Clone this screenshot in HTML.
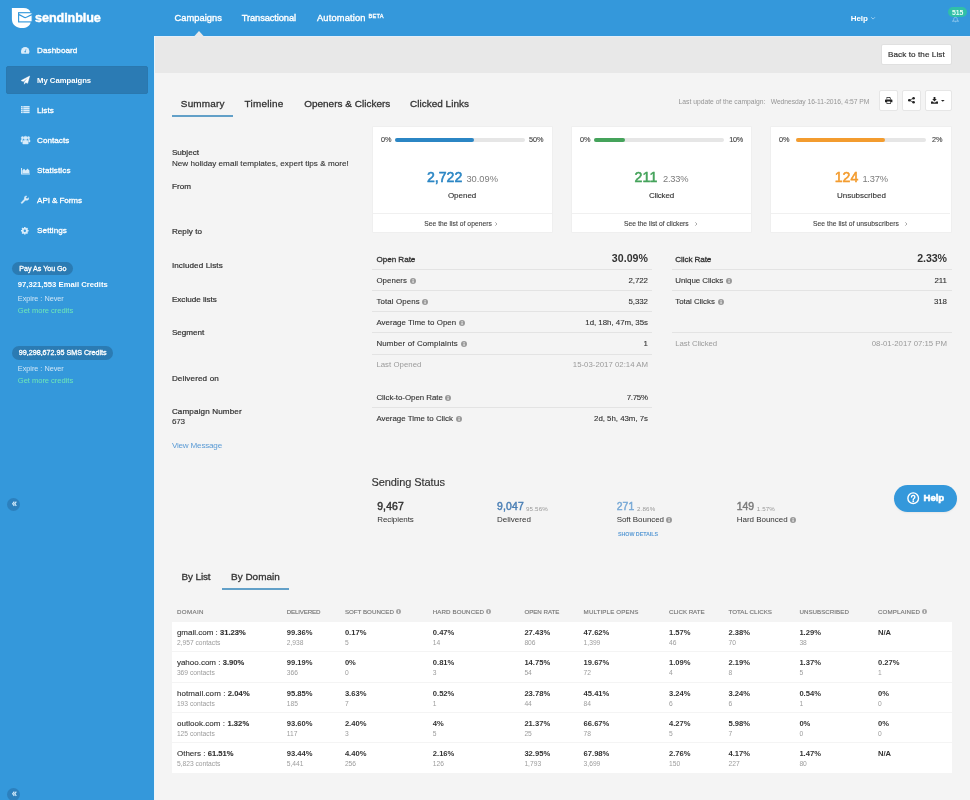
<!DOCTYPE html>
<html lang="en"><head><meta charset="utf-8"><title>SendinBlue - Campaign Report</title>
<style>
html,body{margin:0;padding:0;overflow:hidden}
body{width:970px;height:800px;overflow:hidden;position:relative;background:#f4f4f4;font-family:"Liberation Sans", sans-serif;-webkit-font-smoothing:antialiased}
.t{position:absolute;white-space:pre;line-height:12px}
.b{position:absolute}
svg{position:absolute;overflow:visible}
.logo{font-size:12.6px;font-weight:700;color:#fff;-webkit-text-stroke:0.45px #fff}
.menu{font-size:8.1px;font-weight:400;color:#fff;-webkit-text-stroke:0.3px #fff}
.menuA{font-size:7.7px;font-weight:700;color:#fff;}
.nav{font-size:9.3px;font-weight:400;color:#fff;-webkit-text-stroke:0.35px #fff}
.beta{font-size:5.6px;font-weight:400;color:#fff;-webkit-text-stroke:0.3px #fff}
.help{font-size:8.0px;font-weight:700;color:#fff;}
.badge{font-size:6.9px;font-weight:700;color:#e8fff6;}
.pillt{font-size:7.15px;font-weight:400;color:#fff;-webkit-text-stroke:0.3px #fff}
.cred{font-size:7.7px;font-weight:700;color:#fff;}
.exp{font-size:7.3px;font-weight:400;color:#cfe5f6;}
.get{font-size:7.6px;font-weight:400;color:#6ee7b7;}
.btnt{font-size:8.1px;font-weight:400;color:#333;-webkit-text-stroke:0.2px #333}
.tab{font-size:9.95px;font-weight:400;color:#333;-webkit-text-stroke:0.3px #333}
.lbl{font-size:8.1px;font-weight:400;color:#333;-webkit-text-stroke:0.22px #333}
.val{font-size:8.1px;font-weight:400;color:#333;-webkit-text-stroke:0.12px #333}
.link{font-size:8.1px;font-weight:400;color:#5b9bd5;}
.upd{font-size:6.75px;font-weight:400;color:#969696;}
.pct{font-size:7.3px;font-weight:400;color:#444;-webkit-text-stroke:0.12px #444}
.big{font-size:14.1px;font-weight:400;color:#333;-webkit-text-stroke:0.55px}
.bigp{font-size:9.3px;font-weight:400;color:#7c7c7c;}
.cl{font-size:8.0px;font-weight:400;color:#333;-webkit-text-stroke:0.12px #333}
.see{font-size:6.7px;font-weight:400;color:#444;-webkit-text-stroke:0.12px #444}
.srow{font-size:7.9px;font-weight:400;color:#333;-webkit-text-stroke:0.12px #333}
.srowb{font-size:8.1px;font-weight:400;color:#333;-webkit-text-stroke:0.3px #333}
.srowg{font-size:7.8px;font-weight:400;color:#9a9a9a;}
.sbig{font-size:10.6px;font-weight:700;color:#333;}
.h2{font-size:11.0px;font-weight:400;color:#333;-webkit-text-stroke:0.15px #333}
.ssn{font-size:10.4px;font-weight:400;color:#333;-webkit-text-stroke:0.45px}
.ssp{font-size:6.2px;font-weight:400;color:#999;}
.ssl{font-size:8.0px;font-weight:400;color:#333;}
.show{font-size:5.4px;font-weight:700;color:#5b9bd5;}
.th{font-size:6.2px;font-weight:400;color:#777;-webkit-text-stroke:0.15px #777}
.td{font-size:8.0px;font-weight:400;color:#333;-webkit-text-stroke:0.12px #333}
.tdb{font-size:7.6px;font-weight:700;color:#333;}
.tds{font-size:6.7px;font-weight:400;color:#9c9c9c;}
.hb{font-size:9.6px;font-weight:700;color:#fff;-webkit-text-stroke:0.55px #fff}

.side{left:0;top:0;width:154px;height:800px;background:#3498db}
.top{left:0;top:0;width:970px;height:36px;background:#3498db}
.bar{left:154px;top:36px;width:816px;height:37px;background:#e8e8e8;border-top:1px solid #e4eef8;box-sizing:border-box}
.act{left:6px;top:66px;width:142px;height:27.5px;background:#2b7bb4;border-radius:2px;box-sizing:border-box;border:1px solid #2a78af}
.pill{background:#2b7bb3;border-radius:8px}
.card{background:#fff;border:1px solid #efefef;box-sizing:border-box;border-radius:1px}
.hl{height:1px;background:#e3e3e3}
.btn{background:#fff;border:1px solid #e6e6e6;box-sizing:border-box;border-radius:2px}
.pb{height:4px;border-radius:2px;background:#e6e6e6}
.pf{height:4px;border-radius:2px}
.ul{height:2px;background:#62a0c8}
.circ{width:13px;height:13px;border-radius:6.5px;background:#2c80be}

</style></head><body>
<div class="b side"></div><div class="b top"></div><div class="b bar"></div>
<div class="b act"></div>
<div class="b" style="left:154px;top:36px;width:1px;height:764px;background:#eaf5fc"></div>
<svg style="left:193.6px;top:30.5px" width="10" height="5.5"><path d="M0 5.5 L5 0 L10 5.5Z" fill="#e8e8e8"/></svg>
<svg style="left:870.6px;top:16.9px" width="4.2" height="2.5" viewBox="0 0 5 3"><path d="M0.3 0.3 L2.5 2.5 L4.7 0.3" fill="none" stroke="#bfe0f7" stroke-width="0.9"/></svg>
<div class="b" style="left:948.2px;top:6.8px;width:18.5px;height:10px;border-radius:5px;background:#30bfa8"></div>
<svg style="left:952px;top:17px" width="7" height="5.6" viewBox="0 0 14 11.2"><path d="M7 0.6 C4.6 0.6 3.4 2.6 3.4 5 C3.4 7 2.4 8 0.8 8.4 L13.2 8.4 C11.6 8 10.6 7 10.6 5 C10.6 2.6 9.4 0.6 7 0.6Z" fill="none" stroke="#cfe9fb" stroke-width="1.3" opacity="0.75"/><path d="M5.4 9.4 a1.7 1.5 0 0 0 3.2 0Z" fill="#cfe9fb"/></svg>
<div class="b pill" style="left:12.2px;top:261.6px;width:60.6px;height:13.8px;border-radius:6.9px"></div>
<div class="b pill" style="left:12.2px;top:345.7px;width:100.9px;height:14px;border-radius:7px"></div>
<div class="b circ" style="left:7.2px;top:497.5px"></div>
<svg style="left:11.6px;top:501.4px" width="4.8" height="5.6" viewBox="0 0 10 11"><path d="M4.8 1 L1.4 5.5 L4.8 10 M9 1 L5.6 5.5 L9 10" fill="none" stroke="#d6ecfb" stroke-width="2.4"/></svg>
<div class="b circ" style="left:7.2px;top:787.5px"></div>
<svg style="left:11.6px;top:791.4px" width="4.8" height="5.6" viewBox="0 0 10 11"><path d="M4.8 1 L1.4 5.5 L4.8 10 M9 1 L5.6 5.5 L9 10" fill="none" stroke="#d6ecfb" stroke-width="2.4"/></svg>
<div class="b btn" style="left:881px;top:44px;width:71px;height:20.5px;border-color:#e0e0e0"></div>
<div class="b ul" style="left:171.7px;top:115px;width:61.7px"></div>
<div class="b btn" style="left:878.5px;top:90.4px;width:19.8px;height:20.2px"></div>
<div class="b btn" style="left:902px;top:90.4px;width:19.2px;height:20.2px"></div>
<div class="b btn" style="left:924.7px;top:90.4px;width:27.2px;height:20.2px"></div>
<div class="b card" style="left:372px;top:126px;width:181px;height:106.5px"></div>
<div class="b hl" style="left:373px;top:212.8px;width:179px;background:#f0f0f0"></div>
<div class="b pb" style="left:394.9px;top:138px;width:130px"></div>
<div class="b pf" style="left:394.9px;top:138px;width:78.8px;background:#2b86c4"></div>
<div class="b card" style="left:571px;top:126px;width:181px;height:106.5px"></div>
<div class="b hl" style="left:572px;top:212.8px;width:179px;background:#f0f0f0"></div>
<div class="b pb" style="left:594px;top:138px;width:130px"></div>
<div class="b pf" style="left:594px;top:138px;width:30.5px;background:#45a35b"></div>
<div class="b card" style="left:770px;top:126px;width:182px;height:106.5px"></div>
<div class="b hl" style="left:771px;top:212.8px;width:179px;background:#f0f0f0"></div>
<div class="b pb" style="left:796.4px;top:138px;width:130px"></div>
<div class="b pf" style="left:796.4px;top:138px;width:88.6px;background:#f39c2f"></div>
<svg style="left:495.3px;top:221.6px" width="2.4" height="4" viewBox="0 0 3 5"><path d="M0.4 0.4 L2.5 2.5 L0.4 4.6" fill="none" stroke="#666" stroke-width="0.7"/></svg>
<svg style="left:694.5px;top:221.6px" width="2.4" height="4" viewBox="0 0 3 5"><path d="M0.4 0.4 L2.5 2.5 L0.4 4.6" fill="none" stroke="#666" stroke-width="0.7"/></svg>
<svg style="left:904.5px;top:221.6px" width="2.4" height="4" viewBox="0 0 3 5"><path d="M0.4 0.4 L2.5 2.5 L0.4 4.6" fill="none" stroke="#666" stroke-width="0.7"/></svg>
<div class="b hl" style="left:372px;top:269px;width:280px"></div>
<div class="b hl" style="left:372px;top:290px;width:280px"></div>
<div class="b hl" style="left:372px;top:311px;width:280px"></div>
<div class="b hl" style="left:372px;top:332px;width:280px"></div>
<div class="b hl" style="left:372px;top:354px;width:280px"></div>
<div class="b hl" style="left:372px;top:407px;width:280px"></div>
<div class="b hl" style="left:672px;top:269px;width:280px"></div>
<div class="b hl" style="left:672px;top:290px;width:280px"></div>
<div class="b hl" style="left:672px;top:332px;width:280px"></div>
<svg style="left:409.6px;top:278.0px" width="6" height="6" viewBox="0 0 12 12"><circle cx="6" cy="6" r="6" fill="#999"/><rect x="5" y="5" width="2.2" height="4.6" fill="#f4f4f4"/><rect x="5" y="2.3" width="2.2" height="1.8" fill="#f4f4f4"/></svg>
<svg style="left:422.3px;top:298.90000000000003px" width="6" height="6" viewBox="0 0 12 12"><circle cx="6" cy="6" r="6" fill="#999"/><rect x="5" y="5" width="2.2" height="4.6" fill="#f4f4f4"/><rect x="5" y="2.3" width="2.2" height="1.8" fill="#f4f4f4"/></svg>
<svg style="left:458.9px;top:320.1px" width="6" height="6" viewBox="0 0 12 12"><circle cx="6" cy="6" r="6" fill="#999"/><rect x="5" y="5" width="2.2" height="4.6" fill="#f4f4f4"/><rect x="5" y="2.3" width="2.2" height="1.8" fill="#f4f4f4"/></svg>
<svg style="left:460.6px;top:341.0px" width="6" height="6" viewBox="0 0 12 12"><circle cx="6" cy="6" r="6" fill="#999"/><rect x="5" y="5" width="2.2" height="4.6" fill="#f4f4f4"/><rect x="5" y="2.3" width="2.2" height="1.8" fill="#f4f4f4"/></svg>
<svg style="left:445.4px;top:394.8px" width="6" height="6" viewBox="0 0 12 12"><circle cx="6" cy="6" r="6" fill="#999"/><rect x="5" y="5" width="2.2" height="4.6" fill="#f4f4f4"/><rect x="5" y="2.3" width="2.2" height="1.8" fill="#f4f4f4"/></svg>
<svg style="left:455.5px;top:415.90000000000003px" width="6" height="6" viewBox="0 0 12 12"><circle cx="6" cy="6" r="6" fill="#999"/><rect x="5" y="5" width="2.2" height="4.6" fill="#f4f4f4"/><rect x="5" y="2.3" width="2.2" height="1.8" fill="#f4f4f4"/></svg>
<svg style="left:725.8999999999999px;top:278.2px" width="6" height="6" viewBox="0 0 12 12"><circle cx="6" cy="6" r="6" fill="#999"/><rect x="5" y="5" width="2.2" height="4.6" fill="#f4f4f4"/><rect x="5" y="2.3" width="2.2" height="1.8" fill="#f4f4f4"/></svg>
<svg style="left:717.6999999999999px;top:298.7px" width="6" height="6" viewBox="0 0 12 12"><circle cx="6" cy="6" r="6" fill="#999"/><rect x="5" y="5" width="2.2" height="4.6" fill="#f4f4f4"/><rect x="5" y="2.3" width="2.2" height="1.8" fill="#f4f4f4"/></svg>
<svg style="left:666.4px;top:517.2px" width="6" height="6" viewBox="0 0 12 12"><circle cx="6" cy="6" r="6" fill="#999"/><rect x="5" y="5" width="2.2" height="4.6" fill="#f4f4f4"/><rect x="5" y="2.3" width="2.2" height="1.8" fill="#f4f4f4"/></svg>
<svg style="left:790px;top:516.6px" width="6" height="6" viewBox="0 0 12 12"><circle cx="6" cy="6" r="6" fill="#999"/><rect x="5" y="5" width="2.2" height="4.6" fill="#f4f4f4"/><rect x="5" y="2.3" width="2.2" height="1.8" fill="#f4f4f4"/></svg>
<div class="b" style="left:894px;top:484.5px;width:63px;height:27px;border-radius:13.5px;background:#3498db;box-shadow:0 1px 2px rgba(0,0,0,0.06)"></div>
<svg style="left:906.9px;top:491.7px" width="12.4" height="12.4" viewBox="0 0 24 24"><circle cx="12" cy="12" r="10.3" fill="none" stroke="#fff" stroke-width="2.7"/><path d="M8.8 9.8 a3.2 3.2 0 1 1 4.8 2.8 c-1 .6-1.5 1.1-1.5 2.2" fill="none" stroke="#fff" stroke-width="2.7" stroke-linecap="round"/><circle cx="12.1" cy="17.8" r="1.7" fill="#fff"/></svg>
<div class="b ul" style="left:221.7px;top:588.3px;width:67.6px"></div>
<div class="b" style="left:172.3px;top:621.6px;width:780px;height:151.2px;background:#fff"></div>
<div class="b hl" style="left:172.3px;top:651.4px;width:780px;background:#f4f4f4"></div>
<div class="b hl" style="left:172.3px;top:681.6px;width:780px;background:#f4f4f4"></div>
<div class="b hl" style="left:172.3px;top:711.9px;width:780px;background:#f4f4f4"></div>
<div class="b hl" style="left:172.3px;top:742.1px;width:780px;background:#f4f4f4"></div>
<svg style="left:396.29999999999995px;top:609.3px" width="5" height="5" viewBox="0 0 12 12"><circle cx="6" cy="6" r="6" fill="#a6a6a6"/><rect x="5" y="5" width="2.2" height="4.6" fill="#f4f4f4"/><rect x="5" y="2.3" width="2.2" height="1.8" fill="#f4f4f4"/></svg>
<svg style="left:486.4px;top:609.3px" width="5" height="5" viewBox="0 0 12 12"><circle cx="6" cy="6" r="6" fill="#a6a6a6"/><rect x="5" y="5" width="2.2" height="4.6" fill="#f4f4f4"/><rect x="5" y="2.3" width="2.2" height="1.8" fill="#f4f4f4"/></svg>
<svg style="left:922.4px;top:609.3px" width="5" height="5" viewBox="0 0 12 12"><circle cx="6" cy="6" r="6" fill="#a6a6a6"/><rect x="5" y="5" width="2.2" height="4.6" fill="#f4f4f4"/><rect x="5" y="2.3" width="2.2" height="1.8" fill="#f4f4f4"/></svg>
<svg style="left:11px;top:7px" width="22" height="22" viewBox="11 7 22 22">
<path d="M11.9 7.9 H23.5 C27.4 7.9 30 9.6 30.7 12.8 V22 C30 26 26.4 28.1 22.3 28.1 C16.5 28.1 11.9 25 11.9 19 Z" fill="#fff"/>
<rect x="18.6" y="12.7" width="13.6" height="9.2" fill="#fff" stroke="#3498db" stroke-width="1.15"/>
<path d="M18.8 14.6 C22 15.6 23.8 17.6 25.3 17.6 C26.8 17.6 28.8 15.6 32.2 14.6" fill="none" stroke="#3498db" stroke-width="1.15"/>
</svg>
<svg style="left:20.6px;top:47.2px" width="8.4" height="6.8" viewBox="0 0 18 14.5"><path d="M0 9.2 A9 9.2 0 0 1 18 9.2 C18 11.4 17.6 13.2 16.8 14.5 H1.2 C0.4 13.2 0 11.4 0 9.2Z" fill="#d9ecfa"/><circle cx="9" cy="10" r="1.7" fill="#3498db"/><path d="M9 10 L10.8 4.6" stroke="#3498db" stroke-width="1.3"/></svg>
<svg style="left:21px;top:76px" width="8.8" height="8.2" viewBox="0 0 18 17"><path d="M18 0 L0 9.5 L4.6 11.4 L14.5 3.5 L6.8 12.4 L6.8 17 L9.6 13.5 L13.6 15.2 Z" fill="#fff" stroke="#fff" stroke-width="0.9" stroke-linejoin="round"/></svg>
<svg style="left:21px;top:106px" width="8.6" height="7.2" viewBox="0 0 17 14"><g fill="#d9ecfa"><rect x="0" y="0" width="3.4" height="3"/><rect x="4.4" y="0" width="12.6" height="3"/><rect x="0" y="3.7" width="3.4" height="3"/><rect x="4.4" y="3.7" width="12.6" height="3"/><rect x="0" y="7.4" width="3.4" height="3"/><rect x="4.4" y="7.4" width="12.6" height="3"/><rect x="0" y="11.1" width="3.4" height="2.9"/><rect x="4.4" y="11.1" width="12.6" height="2.9"/></g></svg>
<svg style="left:20.7px;top:135.8px" width="9" height="8" viewBox="0 0 18 16"><g fill="#d9ecfa" stroke="#d9ecfa" stroke-width="0.9"><circle cx="9" cy="4" r="3.6"/><path d="M3.6 16 V12 C3.6 9.4 5.6 8 9 8 C12.4 8 14.4 9.4 14.4 12 V16Z"/><circle cx="3" cy="3.6" r="2.4"/><circle cx="15" cy="3.6" r="2.4"/><path d="M0 12 V9 C0 7.4 1.2 6.6 3.4 6.6 C3 8 2.6 9.5 2.6 12Z"/><path d="M18 12 V9 C18 7.4 16.8 6.6 14.6 6.6 C15 8 15.4 9.5 15.4 12Z"/></g></svg>
<svg style="left:20.7px;top:167.6px" width="9" height="6.4" viewBox="0 0 18 13"><g fill="#d9ecfa"><path d="M0 0 H2 V11 H18 V13 H0Z"/><path d="M2.6 10.6 V5 L6 1.6 L9.4 5 L13 1.2 L17 5 V10.6Z"/></g></svg>
<svg style="left:21px;top:196.2px" width="7.6" height="7.6" viewBox="0 0 16 16"><g fill="#d9ecfa" stroke="#d9ecfa" stroke-width="1" stroke-linejoin="round"><path d="M0.8 13 L8 5.8 L10.2 8 L3 15.2 A1.55 1.55 0 0 1 0.8 13Z"/><path d="M16 3.6 A4.6 4.6 0 1 1 12.4 0 L10.2 2.6 L10.6 5.4 L13.4 5.8Z"/></g></svg>
<svg style="left:20.6px;top:226.9px" width="7.6" height="7.6" viewBox="0 0 16 16"><circle cx="8" cy="8" r="4.6" fill="none" stroke="#d9ecfa" stroke-width="3.6"/><g stroke="#d9ecfa" stroke-width="3.2"><path d="M8 0 V16 M0 8 H16 M2.3 2.3 L13.7 13.7 M13.7 2.3 L2.3 13.7"/></g><circle cx="8" cy="8" r="2.5" fill="#3498db"/></svg>
<svg style="left:885px;top:96.9px" width="7.4" height="7" viewBox="0 0 15 14"><g fill="#222"><path d="M3.2 0 H10 L11.8 1.8 V5 H3.2Z M4.4 1.2 V5 H10.6 V2.4 H9.4 V1.2Z"/><path d="M1.2 5 H13.8 C14.5 5 15 5.5 15 6.2 V10.4 H11.8 V14 H3.2 V10.4 H0 V6.2 C0 5.5 0.5 5 1.2 5Z M4.4 9.2 V12.8 H10.6 V9.2Z"/></g></svg>
<svg style="left:908.2px;top:97.3px" width="6.9" height="6.6" viewBox="0 0 14 13.4"><g fill="#222"><circle cx="2.6" cy="6.7" r="2.6"/><circle cx="11.4" cy="2.6" r="2.6"/><circle cx="11.4" cy="10.8" r="2.6"/></g><path d="M11.4 2.6 L2.6 6.7 L11.4 10.8" fill="none" stroke="#222" stroke-width="1.5"/></svg>
<svg style="left:931px;top:96.7px" width="7" height="6.8" viewBox="0 0 14 13.6"><g fill="#222"><path d="M5.2 0 H8.8 V4 H11.6 L7 8.8 L2.4 4 H5.2Z"/><path d="M0 9.2 H3.8 L5.6 11 H8.4 L10.2 9.2 H14 V13.6 H0Z"/></g></svg>
<svg style="left:940.7px;top:100px" width="3.6" height="1.9" viewBox="0 0 8 4"><path d="M0 0 H8 L4 4Z" fill="#222"/></svg>
<div id="txt" style="position:absolute;left:0;top:0;width:970px;height:800px;will-change:transform">
<div class="t logo" style="letter-spacing:-0.09px;left:35.1px;top:10.0px;line-height:16px">sendinblue</div>
<div class="t nav" style="letter-spacing:0.04px;left:174.5px;top:12.0px">Campaigns</div>
<div class="t nav" style="letter-spacing:-0.10px;left:241.8px;top:12.0px">Transactional</div>
<div class="t nav" style="letter-spacing:0.16px;left:317.0px;top:12.0px">Automation</div>
<div class="t beta" style="letter-spacing:0.25px;left:368.6px;top:9.6px">BETA</div>
<div class="t help" style="letter-spacing:-0.04px;left:850.7px;top:12.9px">Help</div>
<div class="t badge" style="letter-spacing:-0.10px;left:952.0px;top:6.8px">515</div>
<div class="t menu" style="letter-spacing:0.08px;left:37.1px;top:44.7px">Dashboard</div>
<div class="t menuA" style="letter-spacing:-0.02px;left:37.1px;top:74.9px">My Campaigns</div>
<div class="t menu" style="letter-spacing:-0.01px;left:37.1px;top:104.6px">Lists</div>
<div class="t menu" style="letter-spacing:0.03px;left:37.1px;top:134.7px">Contacts</div>
<div class="t menu" style="letter-spacing:0.11px;left:37.1px;top:164.9px">Statistics</div>
<div class="t menu" style="letter-spacing:-0.10px;left:37.1px;top:194.7px">API &amp; Forms</div>
<div class="t menu" style="letter-spacing:0.07px;left:37.1px;top:224.8px">Settings</div>
<div class="t pillt" style="letter-spacing:-0.03px;left:19.3px;top:262.9px">Pay As You Go</div>
<div class="t cred" style="letter-spacing:0.01px;left:17.8px;top:279.4px">97,321,553 Email Credits</div>
<div class="t exp" style="letter-spacing:-0.02px;left:17.8px;top:292.6px">Expire : Never</div>
<div class="t get" style="letter-spacing:-0.05px;left:17.8px;top:304.8px">Get more credits</div>
<div class="t pillt" style="left:18.8px;top:347.1px">99,298,672.95 SMS Credits</div>
<div class="t exp" style="letter-spacing:-0.02px;left:17.8px;top:363.0px">Expire : Never</div>
<div class="t get" style="letter-spacing:-0.05px;left:17.8px;top:375.1px">Get more credits</div>
<div class="t btnt" style="letter-spacing:0.10px;left:887.9px;top:48.9px">Back to the List</div>
<div class="t tab" style="letter-spacing:0.20px;left:180.8px;top:97.0px;line-height:14px">Summary</div>
<div class="t tab" style="letter-spacing:0.21px;left:244.6px;top:97.0px;line-height:14px">Timeline</div>
<div class="t tab" style="letter-spacing:0.03px;left:304.2px;top:97.0px;line-height:14px">Openers &amp; Clickers</div>
<div class="t tab" style="letter-spacing:0.03px;left:410.0px;top:97.0px;line-height:14px">Clicked Links</div>
<div class="t upd" style="letter-spacing:-0.01px;left:678.6px;top:95.7px">Last update of the campaign:</div>
<div class="t upd" style="letter-spacing:-0.06px;left:770.7px;top:95.7px">Wednesday 16-11-2016, 4:57 PM</div>
<div class="t lbl" style="letter-spacing:0.01px;left:171.9px;top:147.1px">Subject</div>
<div class="t val" style="letter-spacing:0.03px;left:171.9px;top:157.9px">New holiday email templates, expert tips &amp; more!</div>
<div class="t lbl" style="letter-spacing:0.10px;left:171.9px;top:181.1px">From</div>
<div class="t lbl" style="letter-spacing:0.05px;left:171.9px;top:225.8px">Reply to</div>
<div class="t lbl" style="letter-spacing:0.10px;left:171.9px;top:259.7px">Included Lists</div>
<div class="t lbl" style="left:171.9px;top:293.5px">Exclude lists</div>
<div class="t lbl" style="letter-spacing:0.01px;left:171.9px;top:327.3px">Segment</div>
<div class="t lbl" style="letter-spacing:0.13px;left:171.9px;top:372.5px">Delivered on</div>
<div class="t lbl" style="letter-spacing:0.13px;left:171.9px;top:406.3px">Campaign Number</div>
<div class="t val" style="letter-spacing:-0.17px;left:171.9px;top:416.4px">673</div>
<div class="t link" style="letter-spacing:-0.20px;left:171.9px;top:439.8px">View Message</div>
<div class="t pct" style="letter-spacing:0.03px;left:381.0px;top:134.0px">0%</div>
<div class="t pct" style="letter-spacing:-0.07px;left:529.0px;top:134.0px">50%</div>
<div class="t big" style="letter-spacing:0.02px;left:426.9px;top:168.0px;line-height:18px;color:#2b86c4;-webkit-text-stroke-color:#2b86c4">2,722</div>
<div class="t bigp" style="left:466.4px;top:172.7px">30.09%</div>
<div class="t cl" style="letter-spacing:-0.01px;left:447.9px;top:189.7px">Opened</div>
<div class="t see" style="letter-spacing:0.05px;left:424.2px;top:217.9px">See the list of openers</div>
<div class="t pct" style="letter-spacing:0.03px;left:580.0px;top:134.0px">0%</div>
<div class="t pct" style="letter-spacing:-0.37px;left:729.3px;top:134.0px">10%</div>
<div class="t big" style="letter-spacing:0.08px;left:634.6px;top:168.0px;line-height:18px;color:#45a35b;-webkit-text-stroke-color:#45a35b">211</div>
<div class="t bigp" style="letter-spacing:-0.23px;left:663.0px;top:172.7px">2.33%</div>
<div class="t cl" style="letter-spacing:-0.18px;left:649.0px;top:189.7px">Clicked</div>
<div class="t see" style="left:624.0px;top:217.9px">See the list of clickers</div>
<div class="t pct" style="letter-spacing:0.03px;left:779.0px;top:134.0px">0%</div>
<div class="t pct" style="letter-spacing:-0.02px;left:932.0px;top:134.0px">2%</div>
<div class="t big" style="letter-spacing:0.09px;left:834.7px;top:168.0px;line-height:18px;color:#f39c2f;-webkit-text-stroke-color:#f39c2f">124</div>
<div class="t bigp" style="letter-spacing:-0.21px;left:862.4px;top:172.7px">1.37%</div>
<div class="t cl" style="letter-spacing:0.01px;left:836.9px;top:189.7px">Unsubscribed</div>
<div class="t see" style="letter-spacing:0.07px;left:813.0px;top:217.9px">See the list of unsubscribers</div>
<div class="t srowb" style="letter-spacing:-0.02px;left:376.4px;top:253.7px">Open Rate</div>
<div class="t sbig" style="letter-spacing:0.04px;right:322.0px;top:251.4px;line-height:14px">30.09%</div>
<div class="t srow" style="letter-spacing:0.05px;left:376.4px;top:275.1px">Openers</div>
<div class="t srow" style="letter-spacing:-0.05px;right:322.1px;top:275.1px">2,722</div>
<div class="t srow" style="letter-spacing:0.11px;left:376.4px;top:296.0px">Total Opens</div>
<div class="t srow" style="letter-spacing:-0.05px;right:322.1px;top:296.0px">5,332</div>
<div class="t srow" style="letter-spacing:0.05px;left:376.4px;top:317.2px">Average Time to Open</div>
<div class="t srow" style="letter-spacing:-0.03px;right:322.0px;top:317.2px">1d, 18h, 47m, 35s</div>
<div class="t srow" style="letter-spacing:0.15px;left:376.4px;top:338.1px">Number of Complaints</div>
<div class="t srow" style="letter-spacing:-0.89px;right:322.9px;top:338.1px">1</div>
<div class="t srow" style="letter-spacing:-0.04px;left:376.4px;top:391.9px">Click-to-Open Rate</div>
<div class="t srow" style="letter-spacing:-0.28px;right:322.3px;top:391.9px">7.75%</div>
<div class="t srow" style="left:376.4px;top:413.0px">Average Time to Click</div>
<div class="t srow" style="letter-spacing:-0.03px;right:322.0px;top:413.0px">2d, 5h, 43m, 7s</div>
<div class="t srowg" style="letter-spacing:0.03px;left:376.4px;top:359.4px">Last Opened</div>
<div class="t srowg" style="letter-spacing:0.01px;right:322.0px;top:359.4px">15-03-2017 02:14 AM</div>
<div class="t srowb" style="letter-spacing:-0.09px;left:675.3px;top:253.9px">Click Rate</div>
<div class="t sbig" style="letter-spacing:-0.07px;right:23.1px;top:251.4px;line-height:14px">2.33%</div>
<div class="t srow" style="letter-spacing:-0.03px;left:675.3px;top:275.4px">Unique Clicks</div>
<div class="t srow" style="right:23.0px;top:275.4px">211</div>
<div class="t srow" style="letter-spacing:-0.03px;left:675.3px;top:295.9px">Total Clicks</div>
<div class="t srow" style="letter-spacing:-0.06px;right:23.1px;top:295.9px">318</div>
<div class="t srowg" style="letter-spacing:-0.06px;left:675.3px;top:337.5px">Last Clicked</div>
<div class="t srowg" style="letter-spacing:-0.01px;right:23.0px;top:337.5px">08-01-2017 07:15 PM</div>
<div class="t h2" style="letter-spacing:-0.09px;left:371.5px;top:474.1px;line-height:16px">Sending Status</div>
<div class="t ssn" style="letter-spacing:0.14px;left:377.2px;top:500.2px;line-height:14px">9,467</div>
<div class="t ssl" style="letter-spacing:-0.08px;left:377.2px;top:514.4px">Recipients</div>
<div class="t ssn" style="letter-spacing:0.22px;left:496.9px;top:500.2px;line-height:14px;color:#4a7fb5;-webkit-text-stroke-color:#4a7fb5">9,047</div>
<div class="t ssp" style="letter-spacing:0.17px;left:526.0px;top:502.6px">95.56%</div>
<div class="t ssl" style="letter-spacing:0.02px;left:496.9px;top:514.4px">Delivered</div>
<div class="t ssn" style="letter-spacing:0.15px;left:616.7px;top:500.2px;line-height:14px;color:#78a9d6;-webkit-text-stroke-color:#78a9d6">271</div>
<div class="t ssp" style="letter-spacing:0.15px;left:637.0px;top:502.6px">2.86%</div>
<div class="t ssl" style="letter-spacing:-0.06px;left:616.7px;top:514.4px">Soft Bounced</div>
<div class="t show" style="letter-spacing:-0.08px;left:618.0px;top:528.0px">SHOW DETAILS</div>
<div class="t ssn" style="letter-spacing:-0.11px;left:736.8px;top:500.2px;line-height:14px;color:#7a7a7a;-webkit-text-stroke-color:#7a7a7a">149</div>
<div class="t ssp" style="letter-spacing:0.13px;left:756.8px;top:502.6px">1.57%</div>
<div class="t ssl" style="letter-spacing:-0.03px;left:736.8px;top:514.4px">Hard Bounced</div>
<div class="t hb" style="letter-spacing:-0.10px;left:923.6px;top:491.2px;line-height:14px">Help</div>
<div class="t tab" style="letter-spacing:-0.10px;left:181.4px;top:570.1px;line-height:14px">By List</div>
<div class="t tab" style="letter-spacing:0.02px;left:231.0px;top:570.1px;line-height:14px">By Domain</div>
<div class="t th" style="letter-spacing:0.36px;left:176.9px;top:605.8px">DOMAIN</div>
<div class="t th" style="letter-spacing:-0.15px;left:286.7px;top:605.8px">DELIVERED</div>
<div class="t th" style="left:344.9px;top:605.8px">SOFT BOUNCED</div>
<div class="t th" style="letter-spacing:0.08px;left:432.8px;top:605.8px">HARD BOUNCED</div>
<div class="t th" style="letter-spacing:-0.03px;left:524.4px;top:605.8px">OPEN RATE</div>
<div class="t th" style="letter-spacing:0.13px;left:583.6px;top:605.8px">MULTIPLE OPENS</div>
<div class="t th" style="letter-spacing:-0.05px;left:669.0px;top:605.8px">CLICK RATE</div>
<div class="t th" style="letter-spacing:0.02px;left:728.5px;top:605.8px">TOTAL CLICKS</div>
<div class="t th" style="letter-spacing:0.03px;left:799.4px;top:605.8px">UNSUBSCRIBED</div>
<div class="t th" style="letter-spacing:0.11px;left:878.0px;top:605.8px">COMPLAINED</div>
<div class="t td" style="left:176.9px;top:627.1px">gmail.com : <b class="tdb">31.23%</b></div>
<div class="t tds" style="left:176.9px;top:637.0px">2,957 contacts</div>
<div class="t tdb" style="left:286.7px;top:627.1px">99.36%</div>
<div class="t tds" style="left:286.7px;top:637.0px">2,938</div>
<div class="t tdb" style="left:344.9px;top:627.1px">0.17%</div>
<div class="t tds" style="left:344.9px;top:637.0px">5</div>
<div class="t tdb" style="left:432.8px;top:627.1px">0.47%</div>
<div class="t tds" style="left:432.8px;top:637.0px">14</div>
<div class="t tdb" style="left:524.4px;top:627.1px">27.43%</div>
<div class="t tds" style="left:524.4px;top:637.0px">806</div>
<div class="t tdb" style="left:583.6px;top:627.1px">47.62%</div>
<div class="t tds" style="left:583.6px;top:637.0px">1,399</div>
<div class="t tdb" style="left:669.0px;top:627.1px">1.57%</div>
<div class="t tds" style="left:669.0px;top:637.0px">46</div>
<div class="t tdb" style="left:728.5px;top:627.1px">2.38%</div>
<div class="t tds" style="left:728.5px;top:637.0px">70</div>
<div class="t tdb" style="left:799.4px;top:627.1px">1.29%</div>
<div class="t tds" style="left:799.4px;top:637.0px">38</div>
<div class="t tdb" style="left:878.0px;top:627.1px">N/A</div>
<div class="t td" style="left:176.9px;top:657.4px">yahoo.com : <b class="tdb">3.90%</b></div>
<div class="t tds" style="left:176.9px;top:667.2px">369 contacts</div>
<div class="t tdb" style="left:286.7px;top:657.4px">99.19%</div>
<div class="t tds" style="left:286.7px;top:667.2px">366</div>
<div class="t tdb" style="left:344.9px;top:657.4px">0%</div>
<div class="t tds" style="left:344.9px;top:667.2px">0</div>
<div class="t tdb" style="left:432.8px;top:657.4px">0.81%</div>
<div class="t tds" style="left:432.8px;top:667.2px">3</div>
<div class="t tdb" style="left:524.4px;top:657.4px">14.75%</div>
<div class="t tds" style="left:524.4px;top:667.2px">54</div>
<div class="t tdb" style="left:583.6px;top:657.4px">19.67%</div>
<div class="t tds" style="left:583.6px;top:667.2px">72</div>
<div class="t tdb" style="left:669.0px;top:657.4px">1.09%</div>
<div class="t tds" style="left:669.0px;top:667.2px">4</div>
<div class="t tdb" style="left:728.5px;top:657.4px">2.19%</div>
<div class="t tds" style="left:728.5px;top:667.2px">8</div>
<div class="t tdb" style="left:799.4px;top:657.4px">1.37%</div>
<div class="t tds" style="left:799.4px;top:667.2px">5</div>
<div class="t tdb" style="left:878.0px;top:657.4px">0.27%</div>
<div class="t tds" style="left:878.0px;top:667.2px">1</div>
<div class="t td" style="letter-spacing:0.08px;left:176.9px;top:687.6px">hotmail.com : <b class="tdb">2.04%</b></div>
<div class="t tds" style="left:176.9px;top:697.5px">193 contacts</div>
<div class="t tdb" style="left:286.7px;top:687.6px">95.85%</div>
<div class="t tds" style="left:286.7px;top:697.5px">185</div>
<div class="t tdb" style="left:344.9px;top:687.6px">3.63%</div>
<div class="t tds" style="left:344.9px;top:697.5px">7</div>
<div class="t tdb" style="left:432.8px;top:687.6px">0.52%</div>
<div class="t tds" style="left:432.8px;top:697.5px">1</div>
<div class="t tdb" style="left:524.4px;top:687.6px">23.78%</div>
<div class="t tds" style="left:524.4px;top:697.5px">44</div>
<div class="t tdb" style="left:583.6px;top:687.6px">45.41%</div>
<div class="t tds" style="left:583.6px;top:697.5px">84</div>
<div class="t tdb" style="left:669.0px;top:687.6px">3.24%</div>
<div class="t tds" style="left:669.0px;top:697.5px">6</div>
<div class="t tdb" style="left:728.5px;top:687.6px">3.24%</div>
<div class="t tds" style="left:728.5px;top:697.5px">6</div>
<div class="t tdb" style="left:799.4px;top:687.6px">0.54%</div>
<div class="t tds" style="left:799.4px;top:697.5px">1</div>
<div class="t tdb" style="left:878.0px;top:687.6px">0%</div>
<div class="t tds" style="left:878.0px;top:697.5px">0</div>
<div class="t td" style="letter-spacing:0.05px;left:176.9px;top:717.9px">outlook.com : <b class="tdb">1.32%</b></div>
<div class="t tds" style="left:176.9px;top:727.8px">125 contacts</div>
<div class="t tdb" style="left:286.7px;top:717.9px">93.60%</div>
<div class="t tds" style="left:286.7px;top:727.8px">117</div>
<div class="t tdb" style="left:344.9px;top:717.9px">2.40%</div>
<div class="t tds" style="left:344.9px;top:727.8px">3</div>
<div class="t tdb" style="left:432.8px;top:717.9px">4%</div>
<div class="t tds" style="left:432.8px;top:727.8px">5</div>
<div class="t tdb" style="left:524.4px;top:717.9px">21.37%</div>
<div class="t tds" style="left:524.4px;top:727.8px">25</div>
<div class="t tdb" style="left:583.6px;top:717.9px">66.67%</div>
<div class="t tds" style="left:583.6px;top:727.8px">78</div>
<div class="t tdb" style="left:669.0px;top:717.9px">4.27%</div>
<div class="t tds" style="left:669.0px;top:727.8px">5</div>
<div class="t tdb" style="left:728.5px;top:717.9px">5.98%</div>
<div class="t tds" style="left:728.5px;top:727.8px">7</div>
<div class="t tdb" style="left:799.4px;top:717.9px">0%</div>
<div class="t tds" style="left:799.4px;top:727.8px">0</div>
<div class="t tdb" style="left:878.0px;top:717.9px">0%</div>
<div class="t tds" style="left:878.0px;top:727.8px">0</div>
<div class="t td" style="letter-spacing:0.02px;left:176.9px;top:748.1px">Others : <b class="tdb">61.51%</b></div>
<div class="t tds" style="left:176.9px;top:758.0px">5,823 contacts</div>
<div class="t tdb" style="left:286.7px;top:748.1px">93.44%</div>
<div class="t tds" style="left:286.7px;top:758.0px">5,441</div>
<div class="t tdb" style="left:344.9px;top:748.1px">4.40%</div>
<div class="t tds" style="left:344.9px;top:758.0px">256</div>
<div class="t tdb" style="left:432.8px;top:748.1px">2.16%</div>
<div class="t tds" style="left:432.8px;top:758.0px">126</div>
<div class="t tdb" style="left:524.4px;top:748.1px">32.95%</div>
<div class="t tds" style="left:524.4px;top:758.0px">1,793</div>
<div class="t tdb" style="left:583.6px;top:748.1px">67.98%</div>
<div class="t tds" style="left:583.6px;top:758.0px">3,699</div>
<div class="t tdb" style="left:669.0px;top:748.1px">2.76%</div>
<div class="t tds" style="left:669.0px;top:758.0px">150</div>
<div class="t tdb" style="left:728.5px;top:748.1px">4.17%</div>
<div class="t tds" style="left:728.5px;top:758.0px">227</div>
<div class="t tdb" style="left:799.4px;top:748.1px">1.47%</div>
<div class="t tds" style="left:799.4px;top:758.0px">80</div>
<div class="t tdb" style="left:878.0px;top:748.1px">N/A</div>
</div>
</body></html>
